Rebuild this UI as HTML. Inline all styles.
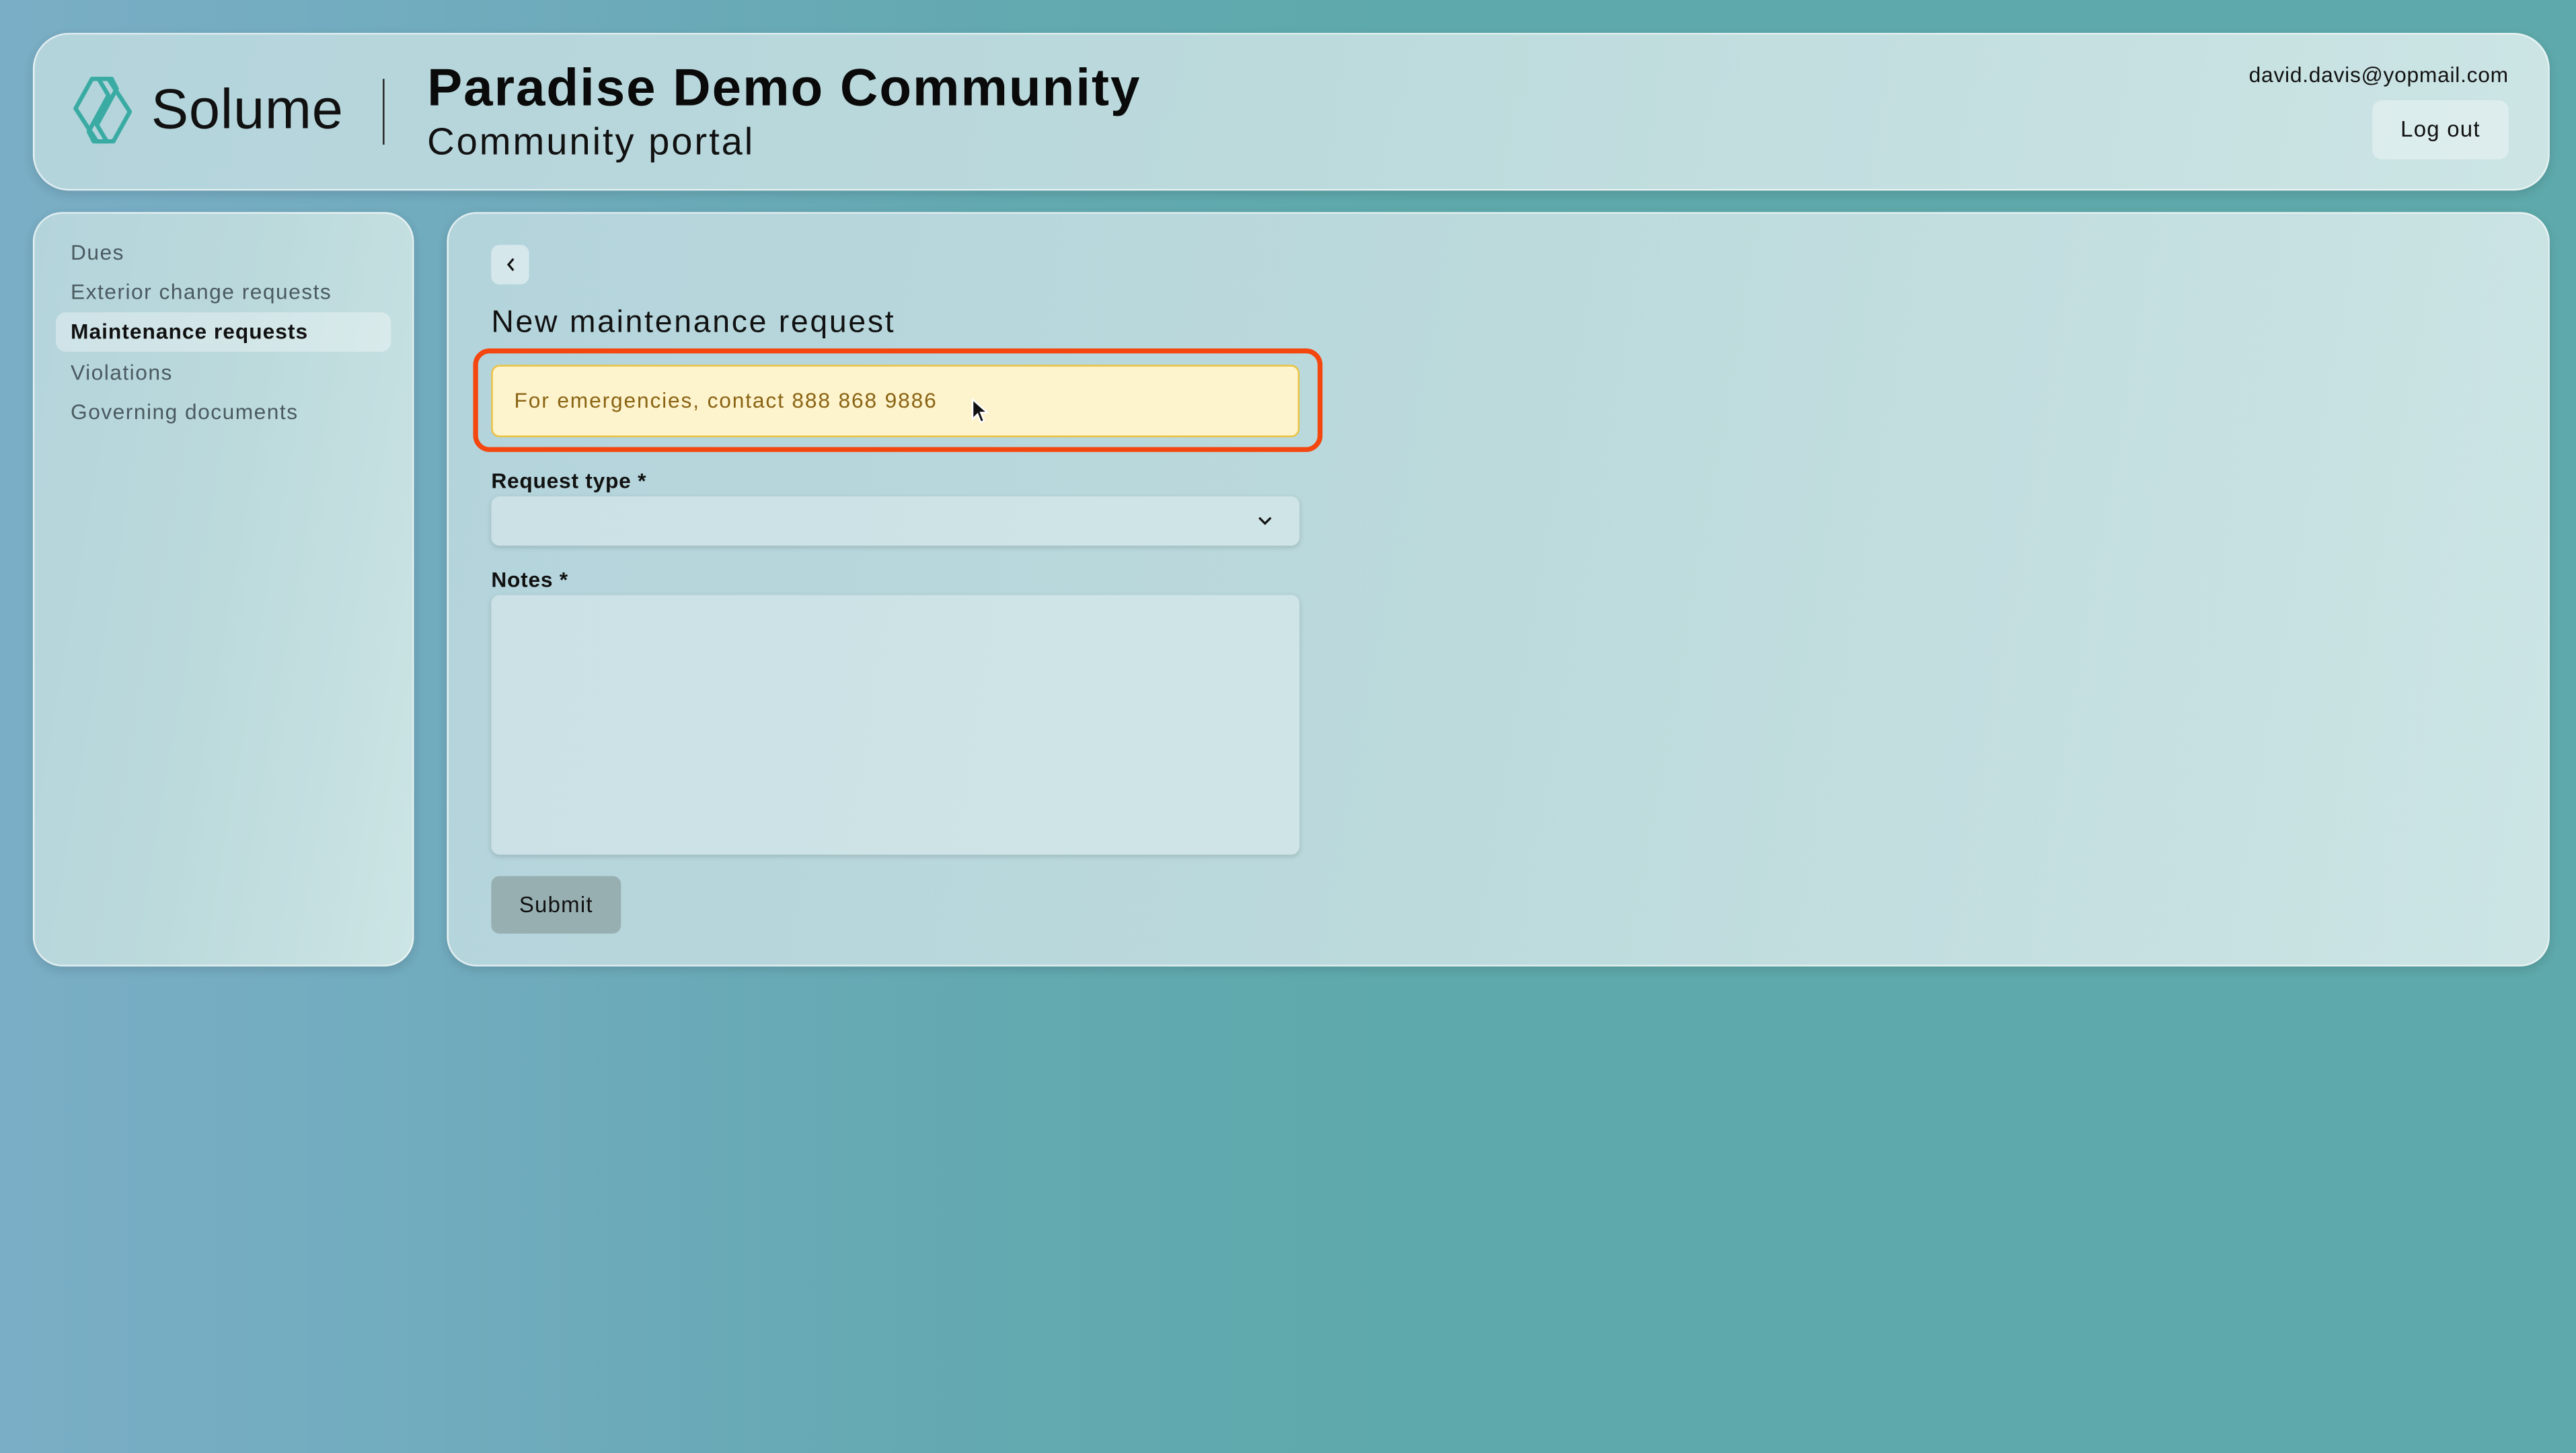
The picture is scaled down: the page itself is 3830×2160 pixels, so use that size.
<!DOCTYPE html>
<html><head><meta charset="utf-8"><style>
html,body{margin:0;padding:0;width:3830px;height:2160px;overflow:hidden}
body{background:linear-gradient(90deg,#7aaec6 0%,#70abbd 18%,#62a9b0 40%,#5ea9ab 55%,#5ea9ab 100%);font-family:"Liberation Sans",sans-serif}
#w{position:absolute;left:0;top:0;width:1568px;height:884px;transform:scale(2.4426,2.4434);transform-origin:0 0}
.card{position:absolute;background:linear-gradient(100deg,#b4d4dc 0%,#bcdadc 50%,#cce4e4 100%);border:1px solid rgba(255,255,255,.6);box-shadow:0 2px 6px rgba(0,0,0,.12);box-sizing:border-box}
.a{position:absolute;white-space:nowrap}
</style></head><body><div id="w">
<div class="card" style="left:20px;top:20px;width:1532px;height:96px;border-radius:22px"></div>
<svg class="a" style="left:43px;top:46px" width="42" height="42" viewBox="0 0 42 42" fill="none" stroke="#3aaba3" stroke-width="2.6" stroke-linejoin="round">
<path d="M13 2 L25 2 L28 8 L16 30 L22 40 L16 40 L3 20 Z"/>
<path d="M26 40 L14 40 L11 34 L23 12 L17 2 L23 2 L36 22 Z"/>
</svg>
<div class="a" style="left:92px;top:48px;font-size:34px;color:#111;letter-spacing:.3px">Solume</div>
<div class="a" style="left:233px;top:48px;width:1px;height:40px;background:#222"></div>
<div class="a" style="left:260px;top:35px;font-size:32px;font-weight:bold;color:#0a0a0a;letter-spacing:.8px">Paradise Demo Community</div>
<div class="a" style="left:260px;top:73px;font-size:23px;color:#111;letter-spacing:1.2px">Community portal</div>
<div class="a" style="right:41px;top:38px;font-size:13px;color:#111;letter-spacing:.3px">david.davis@yopmail.com</div>
<div class="a" style="left:1444px;top:61px;width:83px;height:36px;border-radius:6px;background:rgba(255,255,255,.35);font-size:13.5px;color:#111;line-height:36px;text-align:center;letter-spacing:.5px">Log out</div>

<div class="card" style="left:20px;top:129px;width:232px;height:459px;border-radius:18px"></div>
<div class="a" style="left:34px;top:190px;width:204px;height:24px;border-radius:6px;background:rgba(255,255,255,.35)"></div>
<div class="a" style="left:43px;top:142px;font-size:13px;color:#4a5a60;line-height:24.2px;letter-spacing:.6px">Dues<br>Exterior change requests<br><b style="color:#111;letter-spacing:.4px">Maintenance requests</b><br>Violations<br>Governing documents</div>

<div class="card" style="left:272px;top:129px;width:1280px;height:459px;border-radius:18px"></div>
<div class="a" style="left:299px;top:149px;width:23px;height:24px;border-radius:5px;background:rgba(255,255,255,.45)"></div>
<svg class="a" style="left:306px;top:155px" width="10" height="12" viewBox="0 0 10 12"><path d="M6.5 2.5 L3.5 6 L6.5 9.5" stroke="#111" stroke-width="1.3" fill="none"/></svg>
<div class="a" style="left:299px;top:186px;font-size:19px;color:#111;letter-spacing:1.1px">New maintenance request</div>
<div class="a" style="left:288px;top:212px;width:517px;height:63px;border:3px solid #f4460f;border-radius:10px;box-sizing:border-box"></div>
<div class="a" style="left:299px;top:222px;width:492px;height:44px;background:#fdf3cc;border:1px solid #ecc23e;border-radius:5px;box-sizing:border-box"></div>
<div class="a" style="left:313px;top:236px;font-size:13px;color:#8a6414;letter-spacing:.75px">For emergencies, contact 888 868 9886</div>
<svg class="a" style="left:591px;top:242px" width="12" height="16" viewBox="0 0 12 16"><path d="M1 1 L1 13 L4 10 L6 15 L8 14 L6 9 L10 9 Z" fill="#111" stroke="#fff" stroke-width="1"/></svg>
<div class="a" style="left:299px;top:285px;font-size:13px;font-weight:bold;color:#111;letter-spacing:.3px">Request type *</div>
<div class="a" style="left:299px;top:302px;width:492px;height:30px;border-radius:5px;background:rgba(255,255,255,.3);box-shadow:0 1px 3px rgba(0,0,0,.15)"></div>
<svg class="a" style="left:764px;top:312px" width="12" height="10" viewBox="0 0 12 10"><path d="M2.5 3 L6 6.5 L9.5 3" stroke="#111" stroke-width="1.3" fill="none"/></svg>
<div class="a" style="left:299px;top:345px;font-size:13px;font-weight:bold;color:#111;letter-spacing:.3px">Notes *</div>
<div class="a" style="left:299px;top:362px;width:492px;height:158px;border-radius:5px;background:rgba(255,255,255,.3);box-shadow:0 1px 3px rgba(0,0,0,.15)"></div>
<div class="a" style="left:299px;top:533px;width:79px;height:35px;border-radius:5px;background:#98afb2;font-size:13.5px;color:#111;line-height:35px;text-align:center;letter-spacing:.5px">Submit</div>
</div></body></html>
